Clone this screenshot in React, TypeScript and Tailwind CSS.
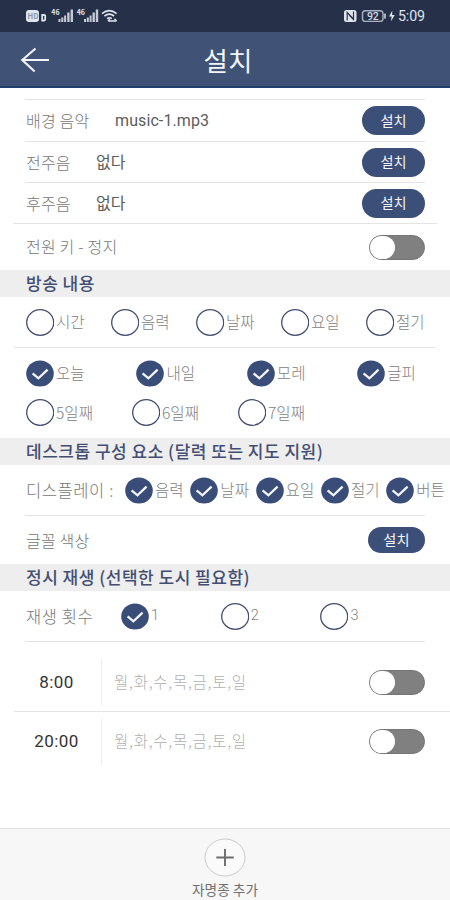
import React, { useState } from 'react';

interface CheckItem {
  label: string;
  checked: boolean;
}

const soundRows = [
  { label: '배경 음악', value: 'music-1.mp3', labelWidth: 'w-[89px]', height: 'h-[42px]' },
  { label: '전주음', value: '없다', labelWidth: 'w-[70px]', height: 'h-[41px]' },
  { label: '후주음', value: '없다', labelWidth: 'w-[70px]', height: 'h-[40px]' },
];

const broadcastItems = ['시간', '음력', '날짜', '요일', '절기'];
const dayItems = ['오늘', '내일', '모레', '글피'];
const laterItems = ['5일째', '6일째', '7일째'];
const displayItems = ['음력', '날짜', '요일', '절기', '버튼'];
const WEEK = '월,화,수,목,금,토,일';

const toItems = (labels: string[], checked: boolean): CheckItem[] =>
  labels.map((label) => ({ label, checked }));

const StatusBar = () => (
  <div className="flex h-8 shrink-0 items-center justify-between bg-[#263149] pr-[25px] pl-[26px] text-[#dfe5ef]">
    <svg width="93" height="18" viewBox="0 0 93 18" fill="currentColor">
      <rect x="0" y="3" width="13" height="12" rx="3" />
      <text x="1.6" y="11.8" fontSize="7.5" fontWeight="700" fill="#8b94a8">HD</text>
      <path d="M15.3 7h3q1.8 0 1.8 1.8v3.8q0 1.8-1.8 1.8h-3z M17 9v3.4h1.3v-3.4z" fillRule="evenodd" />
      <text x="25.3" y="8" fontSize="7" fontWeight="700">46</text>
      <path d="M32.5 12h2v3h-2zM35.3 10.5h2v4.5h-2zM38.1 8.5h2v6.5h-2zM41.2 5.5h2.4v9.5h-2.4zM44.6 2.5h2.4v12.5h-2.4z" opacity=".85" />
      <text x="50.7" y="8" fontSize="7" fontWeight="700">46</text>
      <path d="M58 12h2v3h-2zM60.8 10.5h2v4.5h-2zM63.6 8.5h2v6.5h-2zM66.5 5.5h2.4v9.5h-2.4zM69.8 2.5h2.4v12.5h-2.4z" opacity=".85" />
      <g fill="none" stroke="currentColor" strokeWidth="1.6">
        <path d="M76 6.6q7.3-6 14.6 0M78.4 9.2q4.9-4 9.8 0M81 11.6q2.4-1.8 4.8 0" />
        <path d="M82 14h8.5M84 11.8l-2 2.2M88.5 11.8l2 2.2" strokeWidth="1.3" />
      </g>
    </svg>
    <div className="flex items-center">
      <svg width="54" height="16" viewBox="0 0 54 16" fill="none">
        <rect x="0" y="2" width="12.5" height="12" rx="2.5" fill="#dfe5ef" />
        <path d="M3.2 12.5v-8l6 6.2M9.5 3.5v8L5.2 7" stroke="#263149" strokeWidth="1.2" />
        <rect x="18.5" y="2.8" width="20.5" height="10.6" rx="3" stroke="#aab2c1" strokeWidth="1.4" />
        <rect x="40" y="5.6" width="2" height="5" fill="#aab2c1" />
        <text x="22.9" y="11.8" fontSize="10.5" fontWeight="500" fontFamily="Roboto, sans-serif" fill="#d3d9e4">92</text>
        <path d="M48.3 2.5l-3.2 6h2.4l-.4 4.8 3.6-6.2h-2.6z" fill="#dfe5ef" />
      </svg>
      <span className="w-[27px] font-[Roboto,sans-serif] text-[14.2px] leading-none tracking-[-0.1px] whitespace-nowrap">5:09</span>
    </div>
  </div>
);

const SetButton = ({ small = false }: { small?: boolean }) => (
  <button
    type="button"
    className={`flex items-center justify-center rounded-full bg-[#3c4f78] pb-px text-[14.2px] font-normal text-[#f4f6fa] ${
      small ? 'h-[26px] w-[57px]' : 'h-[29px] w-[63px]'
    }`}
  >
    설치
  </button>
);

const Toggle = () => {
  const [on, setOn] = useState(false);
  return (
    <button
      type="button"
      onClick={() => setOn(!on)}
      className={`flex h-[25px] w-14 items-center rounded-full border border-[#757575] bg-[#808080] ${on ? 'justify-end' : ''}`}
    >
      <span className="h-[23px] w-[25px] rounded-full bg-white" />
    </button>
  );
};

const CheckCircle = ({ label, checked }: CheckItem) => {
  const [value, setValue] = useState(checked);
  // 숫자만 있는 라벨은 조금 작게 표시
  const isNumber = /^\d$/.test(label);
  return (
    <button
      type="button"
      onClick={() => setValue(!value)}
      className="flex items-center gap-[2px] text-[15.6px] font-light whitespace-nowrap text-[#828282]"
    >
      <svg width="28" height="27" viewBox="0 0 28 27" fill="none" className="shrink-0">
        {value ? (
          <>
            <ellipse cx="14" cy="13.5" rx="13.8" ry="13.1" fill="#3a4d78" />
            <path d="M6.6 13.3l5.8 5 9.2-8.6" stroke="#f4f6fa" strokeWidth="2.3" />
          </>
        ) : (
          <ellipse cx="14.2" cy="13.5" rx="13.5" ry="12.8" stroke="#434d70" strokeWidth="1.3" />
        )}
      </svg>
      <span className={isNumber ? 'font-[Roboto,sans-serif] text-[14.5px]' : ''}>{label}</span>
    </button>
  );
};

const SectionTitle = ({ children }: { children: React.ReactNode }) => (
  <h2 className="flex h-[27px] shrink-0 items-center bg-[#eeeeee] pb-[2px] pl-[26px] text-[17px] font-medium tracking-[0.5px] whitespace-nowrap text-[#434e72]">
    {children}
  </h2>
);

const AlarmRow = ({ time }: { time: string }) => (
  <div className="flex h-[58px] items-center pr-[25px]">
    <span className="w-[113px] text-center font-[Roboto,sans-serif] text-[17px] tracking-[0.4px] text-[#333]">{time}</span>
    <div className="-ml-3 h-[47px] w-px bg-[#eeeeee]" />
    <span className="ml-3 grow text-[15.5px] font-light tracking-[0.75px] text-[#b0b0b0]">{WEEK}</span>
    <Toggle />
  </div>
);

const App: React.FC = () => {
  return (
    <div className="flex h-[900px] w-[450px] flex-col overflow-hidden bg-white font-['Noto_Sans_CJK_KR',sans-serif] leading-none">
      <StatusBar />

      <header className="grid h-14 shrink-0 grid-cols-[1fr_auto_1fr] items-center border-b-2 border-[#243e70] bg-[#405276]">
        <svg width="30" height="28" viewBox="0 0 30 26" fill="none" stroke="#f0f3f8" strokeWidth="2.2" className="mt-px ml-5">
          <path d="M15.5 1.5L2.3 13l12.4 11.5M2.3 13H29" />
        </svg>
        <h1 className="pt-[3px] pl-1.5 text-[26.5px] font-normal text-[#f2f5f9]">설치</h1>
        <span />
      </header>

      <main className="flex grow flex-col pt-[11px]">
        <section className="mx-[25px] border-t border-[#e4e4e4]">
          {soundRows.map((row, i) => (
            <div
              key={row.label}
              className={`flex items-center pl-px text-[16px] ${row.height} ${i < 2 ? 'border-b border-[#e4e4e4]' : ''}`}
            >
              <span className={`pb-px font-light tracking-[0.2px] text-[#777] ${row.labelWidth}`}>{row.label}</span>
              <span className="grow pt-px font-[Roboto,'Noto_Sans_CJK_KR',sans-serif] tracking-[0.1px] text-[#5c5c5c]">
                {row.value}
              </span>
              <SetButton />
            </div>
          ))}
        </section>

        <div className="mx-[13px] border-t border-[#e4e4e4]" />
        <div className="flex h-[46px] items-center justify-between pr-[25px] pl-[26px] text-[16px] font-light tracking-[0.2px] text-[#777]">
          <span className="pb-[2px]">전원 키 - 정지</span>
          <Toggle />
        </div>

        <SectionTitle>방송 내용</SectionTitle>
        <div className="mx-[14px] grid h-[51px] grid-cols-[repeat(5,85px)] items-center border-b border-[#e4e4e4] pl-3">
          {toItems(broadcastItems, false).map((item) => <CheckCircle key={item.label} {...item} />)}
        </div>
        <div className="grid h-[50px] grid-cols-[repeat(4,110.4px)] items-center pl-[26px]">
          {toItems(dayItems, true).map((item) => <CheckCircle key={item.label} {...item} />)}
        </div>
        <div className="grid h-[40px] grid-cols-[repeat(3,106px)] items-start pt-px pl-[26px]">
          {toItems(laterItems, false).map((item) => <CheckCircle key={item.label} {...item} />)}
        </div>

        <SectionTitle>데스크톱 구성 요소 (달력 또는 지도 지원)</SectionTitle>
        <div className="mx-[25px] flex h-[51px] items-center border-b border-[#e4e4e4] pl-px">
          <span className="w-[99px] shrink-0 text-[16.5px] font-light tracking-[0.6px] whitespace-nowrap text-[#777]">
            디스플레이 :
          </span>
          <div className="grid grid-cols-[repeat(5,65.3px)]">
            {toItems(displayItems, true).map((item) => <CheckCircle key={item.label} {...item} />)}
          </div>
        </div>
        <div className="flex h-[48px] items-center justify-between pr-[25px] pl-[26px] text-[16px] font-light tracking-[0.2px] text-[#777]">
          <span className="pb-px">글꼴 색상</span>
          <SetButton small />
        </div>

        <SectionTitle>정시 재생 (선택한 도시 필요함)</SectionTitle>
        <div className="mx-[25px] flex h-[51px] items-center border-b border-[#e4e4e4] pl-px">
          <span className="w-[95px] text-[16.5px] font-light tracking-[0.6px] text-[#777]">재생 횟수</span>
          <div className="grid grid-cols-[repeat(3,99.7px)]">
            <CheckCircle label="1" checked />
            <CheckCircle label="2" checked={false} />
            <CheckCircle label="3" checked={false} />
          </div>
        </div>

        <section className="pt-[11px]">
          <AlarmRow time="8:00" />
          <div className="ml-[14px] border-t border-[#e4e4e4]" />
          <AlarmRow time="20:00" />
        </section>
      </main>

      <footer className="flex h-[72px] shrink-0 flex-col items-center border-t border-[#e2e2e2] bg-[#f7f7f7] pt-[9px]">
        <svg width="42" height="39" viewBox="0 0 42 39" fill="none">
          <ellipse cx="21" cy="19.5" rx="20" ry="18.5" fill="#fafafa" stroke="#cbcbcb" />
          <path d="M12.3 19.5h17.4M21 11v17" stroke="#6d6d6d" strokeWidth="1.9" />
        </svg>
        <span className="mt-[6px] text-[13.7px] text-[#707070]">자명종 추가</span>
      </footer>
    </div>
  );
};

export default App;
